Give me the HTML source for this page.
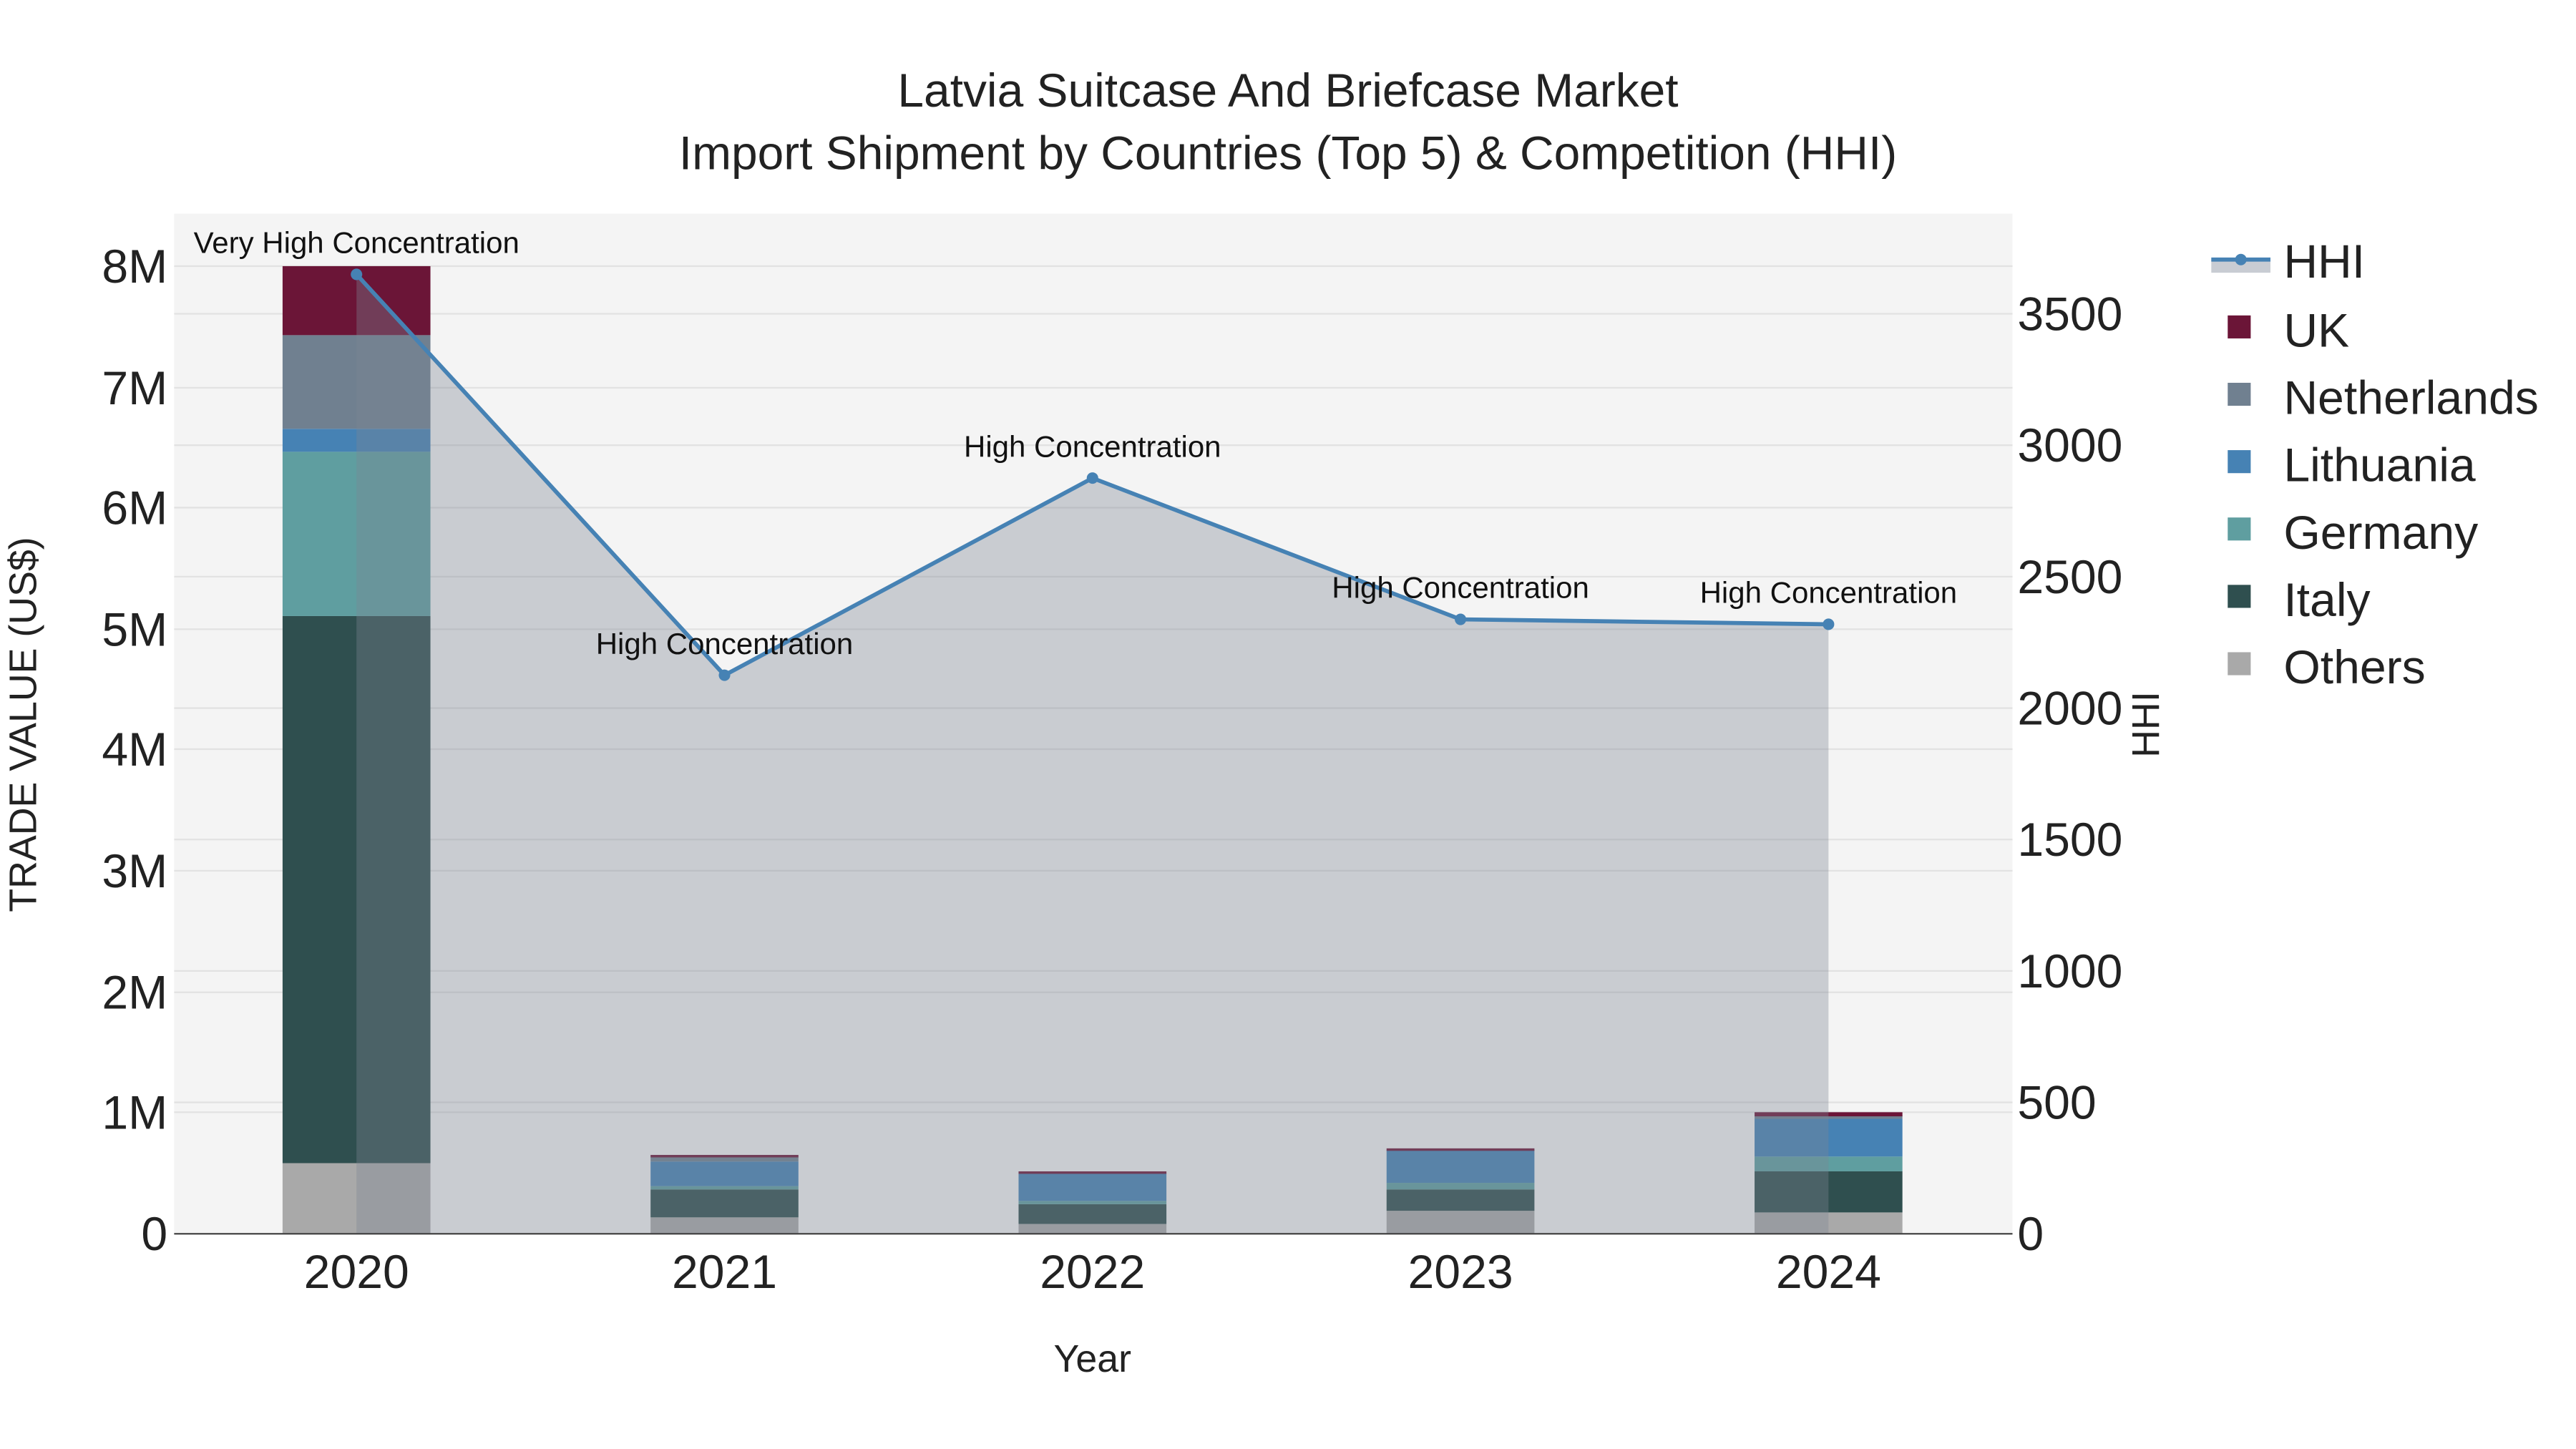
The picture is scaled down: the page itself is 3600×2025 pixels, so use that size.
<!DOCTYPE html>
<html><head><meta charset="utf-8"><style>html,body{margin:0;padding:0;background:#fff}svg{display:block}</style></head><body>
<svg width="3600" height="2025" viewBox="0 0 1568 882" xmlns="http://www.w3.org/2000/svg" font-family="Liberation Sans, sans-serif">
<rect width="1568" height="882" fill="#fff"/>
<rect x="106" y="130" width="1119" height="621" fill="#f4f4f4"/>
<g stroke="#e2e2e2" stroke-width="1">
<line x1="106" x2="1225" y1="677" y2="677"/><line x1="106" x2="1225" y1="604" y2="604"/><line x1="106" x2="1225" y1="530" y2="530"/><line x1="106" x2="1225" y1="456" y2="456"/><line x1="106" x2="1225" y1="383" y2="383"/><line x1="106" x2="1225" y1="309" y2="309"/><line x1="106" x2="1225" y1="236" y2="236"/><line x1="106" x2="1225" y1="162" y2="162"/>
<line x1="106" x2="1225" y1="671" y2="671"/><line x1="106" x2="1225" y1="591" y2="591"/><line x1="106" x2="1225" y1="511" y2="511"/><line x1="106" x2="1225" y1="431" y2="431"/><line x1="106" x2="1225" y1="351" y2="351"/><line x1="106" x2="1225" y1="271" y2="271"/><line x1="106" x2="1225" y1="191" y2="191"/>
</g>
<g>
<rect x="172" y="708" width="90" height="43" fill="#a9a9a9"/><rect x="172" y="375" width="90" height="333" fill="#2f4f4f"/><rect x="172" y="275" width="90" height="100" fill="#5f9ea0"/><rect x="172" y="261" width="90" height="14" fill="#4682b4"/><rect x="172" y="204" width="90" height="57" fill="#708090"/><rect x="172" y="162" width="90" height="42" fill="#6b1537"/>
<rect x="396" y="741" width="90" height="10" fill="#a9a9a9"/><rect x="396" y="724" width="90" height="17" fill="#2f4f4f"/><rect x="396" y="722" width="90" height="2" fill="#5f9ea0"/><rect x="396" y="707" width="90" height="15" fill="#4682b4"/><rect x="396" y="704" width="90" height="3" fill="#708090"/><rect x="396" y="703" width="90" height="1.5" fill="#6b1537"/>
<rect x="620" y="745" width="90" height="6" fill="#a9a9a9"/><rect x="620" y="733" width="90" height="12" fill="#2f4f4f"/><rect x="620" y="731" width="90" height="2" fill="#5f9ea0"/><rect x="620" y="714" width="90" height="17" fill="#4682b4"/><rect x="620" y="713" width="90" height="1.5" fill="#6b1537"/>
<rect x="844" y="737" width="90" height="14" fill="#a9a9a9"/><rect x="844" y="724" width="90" height="13" fill="#2f4f4f"/><rect x="844" y="720" width="90" height="4" fill="#5f9ea0"/><rect x="844" y="700" width="90" height="20" fill="#4682b4"/><rect x="844" y="699" width="90" height="1.5" fill="#6b1537"/>
<rect x="1068" y="738" width="90" height="13" fill="#a9a9a9"/><rect x="1068" y="713" width="90" height="25" fill="#2f4f4f"/><rect x="1068" y="704" width="90" height="9" fill="#5f9ea0"/><rect x="1068" y="681" width="90" height="23" fill="#4682b4"/><rect x="1068" y="679" width="90" height="2" fill="#708090"/><rect x="1068" y="677" width="90" height="2.5" fill="#6b1537"/>
</g>
<path d="M217,167 L441,411 L665,291 L889,377 L1113,380 L1113,751 L217,751 Z" fill="rgb(124,132,148)" fill-opacity="0.36"/>
<polyline points="217,167 441,411 665,291 889,377 1113,380" fill="none" stroke="#4682b4" stroke-width="2.5"/>
<g fill="#4682b4"><circle cx="217" cy="167" r="3.5"/><circle cx="441" cy="411" r="3.5"/><circle cx="665" cy="291" r="3.5"/><circle cx="889" cy="377" r="3.5"/><circle cx="1113" cy="380" r="3.5"/></g>
<line x1="106" x2="1225" y1="751" y2="751" stroke="#444" stroke-width="1"/>
<g font-size="18.3" fill="#111" text-anchor="middle">
<text x="217" y="154">Very High Concentration</text><text x="441" y="398">High Concentration</text><text x="665" y="278">High Concentration</text><text x="889" y="364">High Concentration</text><text x="1113" y="367">High Concentration</text>
</g>
<g font-size="28.7" fill="#222" text-anchor="middle">
<text x="784" y="65">Latvia Suitcase And Briefcase Market</text>
<text x="784" y="103">Import Shipment by Countries (Top 5) &amp; Competition (HHI)</text>
</g>
<g font-size="28.8" fill="#222" text-anchor="end">
<text x="102" y="761">0</text><text x="102" y="687">1M</text><text x="102" y="614">2M</text><text x="102" y="540">3M</text><text x="102" y="466">4M</text><text x="102" y="393">5M</text><text x="102" y="319">6M</text><text x="102" y="246">7M</text><text x="102" y="172">8M</text>
</g>
<g font-size="28.8" fill="#222">
<text x="1228" y="761">0</text><text x="1228" y="681">500</text><text x="1228" y="601">1000</text><text x="1228" y="521">1500</text><text x="1228" y="441">2000</text><text x="1228" y="361">2500</text><text x="1228" y="281">3000</text><text x="1228" y="201">3500</text>
</g>
<g font-size="28.8" fill="#222" text-anchor="middle">
<text x="217" y="784">2020</text><text x="441" y="784">2021</text><text x="665" y="784">2022</text><text x="889" y="784">2023</text><text x="1113" y="784">2024</text>
</g>
<text x="665" y="835" font-size="23.4" fill="#222" text-anchor="middle">Year</text>
<text transform="translate(22,441) rotate(-90)" font-size="23.4" fill="#222" text-anchor="middle">TRADE VALUE (US$)</text>
<text transform="translate(1314,441) rotate(-90)" font-size="23.4" fill="#222" text-anchor="middle">HHI</text>
<g>
<rect x="1346" y="158" width="36" height="8" fill="#c8ccd3"/><line x1="1346" x2="1382" y1="158" y2="158" stroke="#4682b4" stroke-width="2.5"/><circle cx="1364" cy="158" r="3.5" fill="#4682b4"/>
<rect x="1356" y="192" width="14" height="14" fill="#6b1537"/><rect x="1356" y="233" width="14" height="14" fill="#708090"/><rect x="1356" y="274" width="14" height="14" fill="#4682b4"/><rect x="1356" y="315" width="14" height="14" fill="#5f9ea0"/><rect x="1356" y="356" width="14" height="14" fill="#2f4f4f"/><rect x="1356" y="397" width="14" height="14" fill="#a9a9a9"/>
<g font-size="28.8" fill="#222">
<text x="1390" y="169">HHI</text><text x="1390" y="211">UK</text><text x="1390" y="252">Netherlands</text><text x="1390" y="293">Lithuania</text><text x="1390" y="334">Germany</text><text x="1390" y="375">Italy</text><text x="1390" y="416">Others</text>
</g></g>
</svg>
</body></html>
